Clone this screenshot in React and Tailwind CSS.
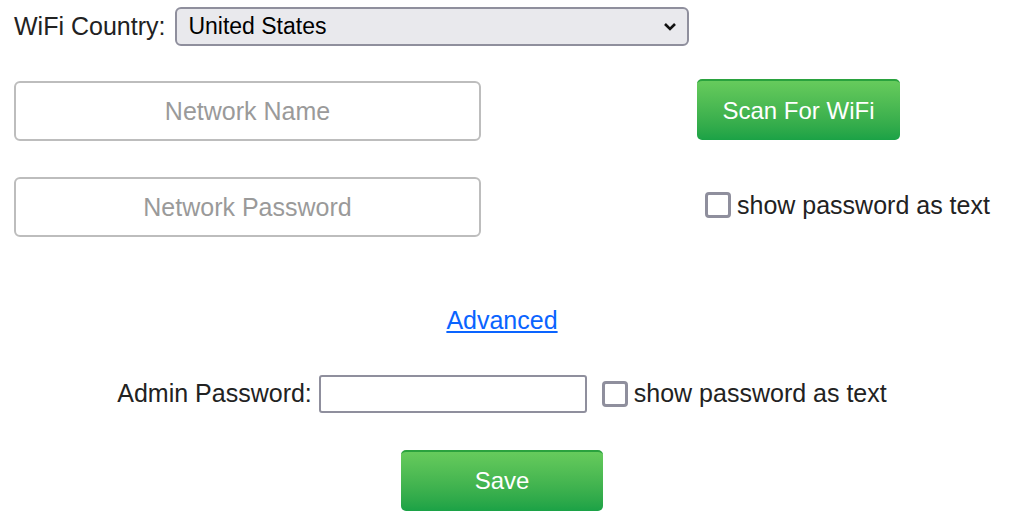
import React from "react";

function Check({ className = "" }) {
  return (
    <span className={"inline-block w-[26px] h-[26px] border-[3px] border-[#8f8f9d] rounded-[4px] bg-white shrink-0 " + className} />
  );
}

export default function App() {
  const font = { fontFamily: '"Liberation Sans", Arial, sans-serif' };
  return (
    <div className="w-[1004px] bg-white text-[#222] text-[25px] leading-[1.15]" style={font}>
      <div className="px-[14px]">
        {/* Row 1 */}
        <div className="flex items-center pt-[7px] gap-[10px]">
          <span>WiFi Country:</span>
          <div className="relative w-[514px] h-[39px] bg-[#e9e9ed] border-2 border-[#8f8f9d] rounded-[6px] flex items-center pl-[11px] text-[23px] text-black">
            United States
            <svg className="absolute right-[10px] top-[13px]" width="14" height="10" viewBox="0 0 14 10">
              <path d="M2 2 L7 7 L12 2" fill="none" stroke="#111" strokeWidth="2.6" />
            </svg>
          </div>
        </div>

        {/* Row 2 */}
        <div className="flex items-start mt-[33px]">
          <div className="mt-[2px] w-[467px] h-[60px] border-2 border-[#bdbdbd] rounded-[6px] flex items-center justify-center text-[#9a9a9a]">
            Network Name
          </div>
          <button className="ml-[216px] w-[203px] h-[61px] rounded-[5px] text-white text-[24px] bg-gradient-to-b from-[#66cb5c] to-[#1aa246] border-t-2 border-[#2aa23e]">
            Scan For WiFi
          </button>
        </div>

        {/* Row 3 */}
        <div className="flex items-center mt-[36px]">
          <div className="w-[467px] h-[60px] border-2 border-[#bdbdbd] rounded-[6px] flex items-center justify-center text-[#9a9a9a]">
            Network Password
          </div>
          <div className="ml-[224px] flex items-center gap-[6px] -mt-[4px]">
            <Check />
            <span>show password as text</span>
          </div>
        </div>
      </div>

      {/* Advanced */}
      <div className="text-center mt-[69px]">
        <a href="#" className="text-[#0a64ff] underline">Advanced</a>
      </div>

      {/* Admin row */}
      <div className="flex items-center justify-center mt-[40px]">
        <span>Admin Password:</span>
        <div className="ml-[7px] w-[268px] h-[38px] border-2 border-[#8f8f9d] rounded-[3px] bg-white" />
        <Check className="ml-[15px]" />
        <span className="ml-[6px]">show password as text</span>
      </div>

      {/* Save */}
      <div className="flex justify-center mt-[37px]">
        <button className="w-[202px] h-[61px] rounded-[5px] text-white text-[24px] bg-gradient-to-b from-[#66cb5c] to-[#1aa246] border-t-2 border-[#2aa23e]">
          Save
        </button>
      </div>
    </div>
  );
}
